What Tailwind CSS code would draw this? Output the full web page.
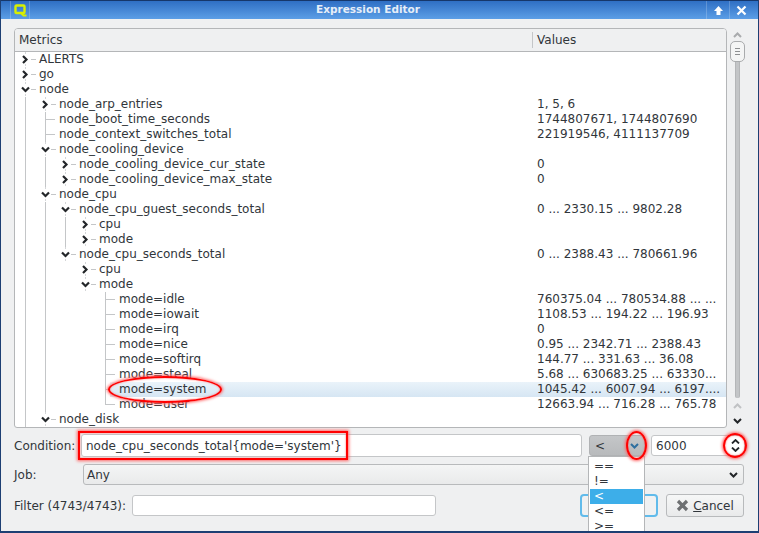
<!DOCTYPE html>
<html lang="en">
<head>
  <meta charset="UTF-8">
  <title>Expression Editor</title>
  <script src="https://cdn.jsdelivr.net/npm/@tailwindcss/browser@4"></script>
</head>
<body class="bg-[#1d3f73]">
  <div class="relative w-[759px] h-[533px] overflow-hidden flex flex-col font-['DejaVu_Sans',sans-serif] text-[12px] text-[#31363b] border border-[#1d3f73] border-b-2 border-t-0 bg-[#eff0f1]">

    <!-- title bar -->
    <div class="h-[19px] -mx-px flex items-center shrink-0 bg-gradient-to-b from-[#2f6fc4] to-[#5c9ee6] border-t border-[#16376b] text-white pl-[10px] pr-[6px]">
      <div class="w-[20px] h-full flex items-center justify-center border-x border-white/20">
        <svg width="13" height="13" viewBox="0 0 13 13"><rect x="1.5" y="1.5" width="9" height="7.5" rx="1" fill="none" stroke="#d8f000" stroke-width="2.4"/><path d="M6.5 8.5l3 3h3" fill="none" stroke="#d8f000" stroke-width="2"/></svg>
      </div>
      <div class="flex-1 text-center text-[10.5px] font-bold text-[#e6eef8]">Expression Editor</div>
      <div class="w-[23px] h-full flex items-center justify-center border-l border-white/20">
        <svg width="11" height="11" viewBox="0 0 11 11"><path d="M5.5 1L10 6H7.5v4h-4V6H1z" fill="#fff"/></svg>
      </div>
      <div class="w-[24px] h-full flex items-center justify-center border-l border-white/20">
        <svg width="11" height="11" viewBox="0 0 11 11"><path d="M1.5 1.5l8 8M9.5 1.5l-8 8" stroke="#fff" stroke-width="2.2"/></svg>
      </div>
    </div>

    <!-- tree + scrollbar -->
    <div class="flex pl-[13px] pt-[9px] shrink-0">
      <div class="w-[713px] h-[400px] flex flex-col bg-white border border-[#b4b6b8] rounded-t-[4px] rounded-b-[3px] overflow-hidden">
        <div class="h-[23px] shrink-0 flex items-center bg-[#eff0f1] border-b border-[#b4b6b8]">
          <div class="w-[518px] pl-[4px] h-[16px] flex items-center border-r border-[#c4c6c8]">Metrics</div>
          <div class="pl-[4px]">Values</div>
        </div>
        <div id="tree" class="flex-1 overflow-hidden"></div>
      </div>
      <div class="w-[16px] ml-[2px] h-[400px] flex flex-col items-center">
        <svg class="mt-[4px] shrink-0" width="9" height="6" viewBox="0 0 9 6"><path d="M1 5l3.5-3.5L8 5" fill="none" stroke="#a9abad" stroke-width="2"/></svg>
        <div class="w-[15px] h-[21px] mt-[3px] shrink-0 rounded-[5px] border border-[#a9abad] bg-[#f4f5f5] flex flex-col items-center justify-center gap-[2px]">
          <div class="w-[5px] h-px bg-[#8d8f91]"></div><div class="w-[5px] h-px bg-[#8d8f91]"></div><div class="w-[5px] h-px bg-[#8d8f91]"></div>
        </div>
        <div class="w-[5px] flex-1 bg-[#c3c5c7] border-x border-[#b4b6b8] rounded-b-[2px]"></div>
        <svg class="mt-[5px] shrink-0" width="9" height="6" viewBox="0 0 9 6"><path d="M1 5l3.5-3.5L8 5" fill="none" stroke="#c0c2c4" stroke-width="2"/></svg>
        <svg class="mt-[9px] mb-[4px] shrink-0" width="9" height="6" viewBox="0 0 9 6"><path d="M1 1l3.5 3.5L8 1" fill="none" stroke="#232629" stroke-width="2"/></svg>
      </div>
    </div>

    <!-- form -->
    <div class="flex items-center pl-[13px] h-[23px] mt-[6px] shrink-0">
      <div class="w-[67px]">Condition:</div>
      <div class="w-[501px] h-[23px] border border-[#c4c6c8] rounded-[3px] bg-white flex items-center pl-[4px]">node_cpu_seconds_total{mode='system'}</div>
      <div class="w-[56px] h-[21px] ml-[7px] rounded-[3px] bg-gradient-to-b from-[#c4c6c8] to-[#b8babc] border border-[#b0b2b4] flex items-center justify-between pl-[5px] pr-[5px]">
        <span>&lt;</span>
        <svg width="9" height="6" viewBox="0 0 9 6"><path d="M1 1l3.5 3.5L8 1" fill="none" stroke="#2f6f9f" stroke-width="2"/></svg>
      </div>
      <div class="w-[94px] h-[21px] ml-[6px] rounded-[3px] bg-white border border-[#c4c6c8] flex items-center justify-between pl-[4px] pr-[4px]">
        <span>6000</span>
        <span class="flex flex-col gap-[3px]">
          <svg class="block" width="9" height="5" viewBox="0 0 9 5"><path d="M1 4.5L4.5 1 8 4.5" fill="none" stroke="#232629" stroke-width="1.8"/></svg>
          <svg class="block" width="9" height="5" viewBox="0 0 9 5"><path d="M1 .5L4.5 4 8 .5" fill="none" stroke="#232629" stroke-width="1.8"/></svg>
        </span>
      </div>
    </div>
    <div class="flex items-center pl-[13px] h-[21px] mt-[7px] shrink-0">
      <div class="w-[69px]">Job:</div>
      <div class="w-[661px] h-[21px] rounded-[3px] border border-[#b8babc] bg-gradient-to-b from-[#f4f5f5] to-[#e9eaeb] flex items-center justify-between pl-[3px] pr-[5px]">
        <span>Any</span>
        <svg width="9" height="6" viewBox="0 0 9 6"><path d="M1 1l3.5 3.5L8 1" fill="none" stroke="#232629" stroke-width="2"/></svg>
      </div>
    </div>
    <div class="flex items-center pl-[13px] h-[23px] mt-[9px] shrink-0">
      <div class="w-[118px]">Filter (4743/4743):</div>
      <div class="w-[304px] h-[21px] border border-[#c4c6c8] rounded-[3px] bg-white"></div>
      <div class="w-[78px] h-[23px] ml-[144px] rounded-[4px] border-2 border-[#3daee9]/80 bg-[#f0f1f2]"></div>
      <div class="w-[78px] h-[23px] ml-[8px] rounded-[3px] border border-[#b8babc] bg-gradient-to-b from-[#f6f7f7] to-[#e9eaeb] flex items-center justify-center gap-[4px]">
        <svg width="13" height="13" viewBox="0 0 13 13"><path d="M2 2l9 9M11 2l-9 9" stroke="#6e7072" stroke-width="3.2"/></svg>
        <span><span class="underline">C</span>ancel</span>
      </div>
    </div>

    <!-- combo popup -->
    <div class="absolute left-[587px] top-[456px] w-[57px] h-[79px] bg-white border border-[#b4b6b8] px-[1px] pt-[2px] leading-[15px]">
      <div class="h-[15px] pl-[4px]">==</div>
      <div class="h-[15px] pl-[4px]">!=</div>
      <div class="h-[15px] pl-[4px] bg-[#3daee9] text-white">&lt;</div>
      <div class="h-[15px] pl-[4px]">&lt;=</div>
      <div class="h-[15px] pl-[4px]">&gt;=</div>
    </div>

    <!-- red annotations -->
    <div class="absolute left-[107px] top-[376px] w-[114px] h-[27px] rounded-[50%] border-2 border-[#f00] shadow-[0_0_3px_1px_#f66,inset_0_0_2px_#f66]"></div>
    <div class="absolute left-[77px] top-[431px] w-[270px] h-[29px] border-2 border-[#f00] shadow-[0_0_3px_1px_#f66,inset_0_0_2px_#f66]"></div>
    <div class="absolute left-[625px] top-[431px] w-[21px] h-[29px] rounded-[50%] border-2 border-[#f00] shadow-[0_0_3px_1px_#f66,inset_0_0_2px_#f66]"></div>
    <div class="absolute left-[722px] top-[433px] w-[24px] h-[25px] rounded-[50%] border-2 border-[#f00] shadow-[0_0_3px_1px_#f66,inset_0_0_2px_#f66]"></div>
  </div>

  <script>
    // [label, value, open, children, hasMoreAfter]
    const metrics = [
      ['ALERTS', '', false],
      ['go', '', false],
      ['node', '', true, [
        ['node_arp_entries', '1, 5, 6', false],
        ['node_boot_time_seconds', '1744807671, 1744807690'],
        ['node_context_switches_total', '221919546, 4111137709'],
        ['node_cooling_device', '', true, [
          ['node_cooling_device_cur_state', '0', false],
          ['node_cooling_device_max_state', '0', false]
        ]],
        ['node_cpu', '', true, [
          ['node_cpu_guest_seconds_total', '0 ... 2330.15 ... 9802.28', true, [
            ['cpu', '', false],
            ['mode', '', false]
          ]],
          ['node_cpu_seconds_total', '0 ... 2388.43 ... 780661.96', true, [
            ['cpu', '', false],
            ['mode', '', true, [
              ['mode=idle', '760375.04 ... 780534.88 ... ...'],
              ['mode=iowait', '1108.53 ... 194.22 ... 196.93'],
              ['mode=irq', '0'],
              ['mode=nice', '0.95 ... 2342.71 ... 2388.43'],
              ['mode=softirq', '144.77 ... 331.63 ... 36.08'],
              ['mode=steal', '5.68 ... 630683.25 ... 63330...'],
              ['mode=system', '1045.42 ... 6007.94 ... 6197....'],
              ['mode=user', '12663.94 ... 716.28 ... 765.78']
            ]]
          ]]
        ]],
        ['node_disk', '', true, [['', '']], true]
      ], true]
    ];

    const tree = document.getElementById('tree');

    function guide(depth, guides, isLast, open) {
      const x = 10 + 20 * depth;
      let s = '';
      guides.forEach((on, i) => {
        if (on) s += `<path d="M${10.5 + 20 * i} 0V15" stroke="#c4c6c8"/>`;
      });
      if (open === undefined) {
        s += `<path d="M${x + 0.5} 0V${isLast ? 8 : 15}M${x} 7.5H${x + 10}" stroke="#c4c6c8"/>`;
      } else {
        s += `<path d="M${x + 0.5} 0V15" stroke="#d4d6d8" stroke-dasharray="2 2"/>`;
        s += `<path d="M${x + 6} 7.5H${x + 11}" stroke="#c4c6c8"/>`;
        s += `<rect x="${x - 4}" y="3" width="9" height="9" fill="#fff"/>`;
        s += open
          ? `<path d="M${x - 3} 5.5l3.5 3.5 3.5-3.5" fill="none" stroke="#232629" stroke-width="2.2"/>`
          : `<path d="M${x - 2} 4l3.5 3.5-3.5 3.5" fill="none" stroke="#232629" stroke-width="2.2"/>`;
      }
      const w = 24 + 20 * depth;
      return `<svg class="shrink-0 block" width="${w}" height="15">${s}</svg>`;
    }

    function render(items, depth, guides) {
      items.forEach((item, i) => {
        const [label, value, open, children, more] = item;
        const isLast = i === items.length - 1 && !more;
        const selected = label === 'mode=system';
        const row = document.createElement('div');
        row.className = 'flex h-[15px] leading-[15px] whitespace-nowrap';
        row.innerHTML = guide(depth, guides, isLast, open) +
          `<div class="flex flex-1 ${selected ? '-ml-[9px] pl-[9px] bg-gradient-to-b from-[#eaf3fa] to-[#d6e6f3]' : ''}">` +
          `<div class="flex-1">${label}</div>` +
          `<div class="w-[189px] overflow-hidden shrink-0">${value}</div></div>`;
        tree.appendChild(row);
        if (children) render(children, depth + 1, guides.concat(!isLast));
      });
    }
    render(metrics, 0, []);
  </script>
</body>
</html>
